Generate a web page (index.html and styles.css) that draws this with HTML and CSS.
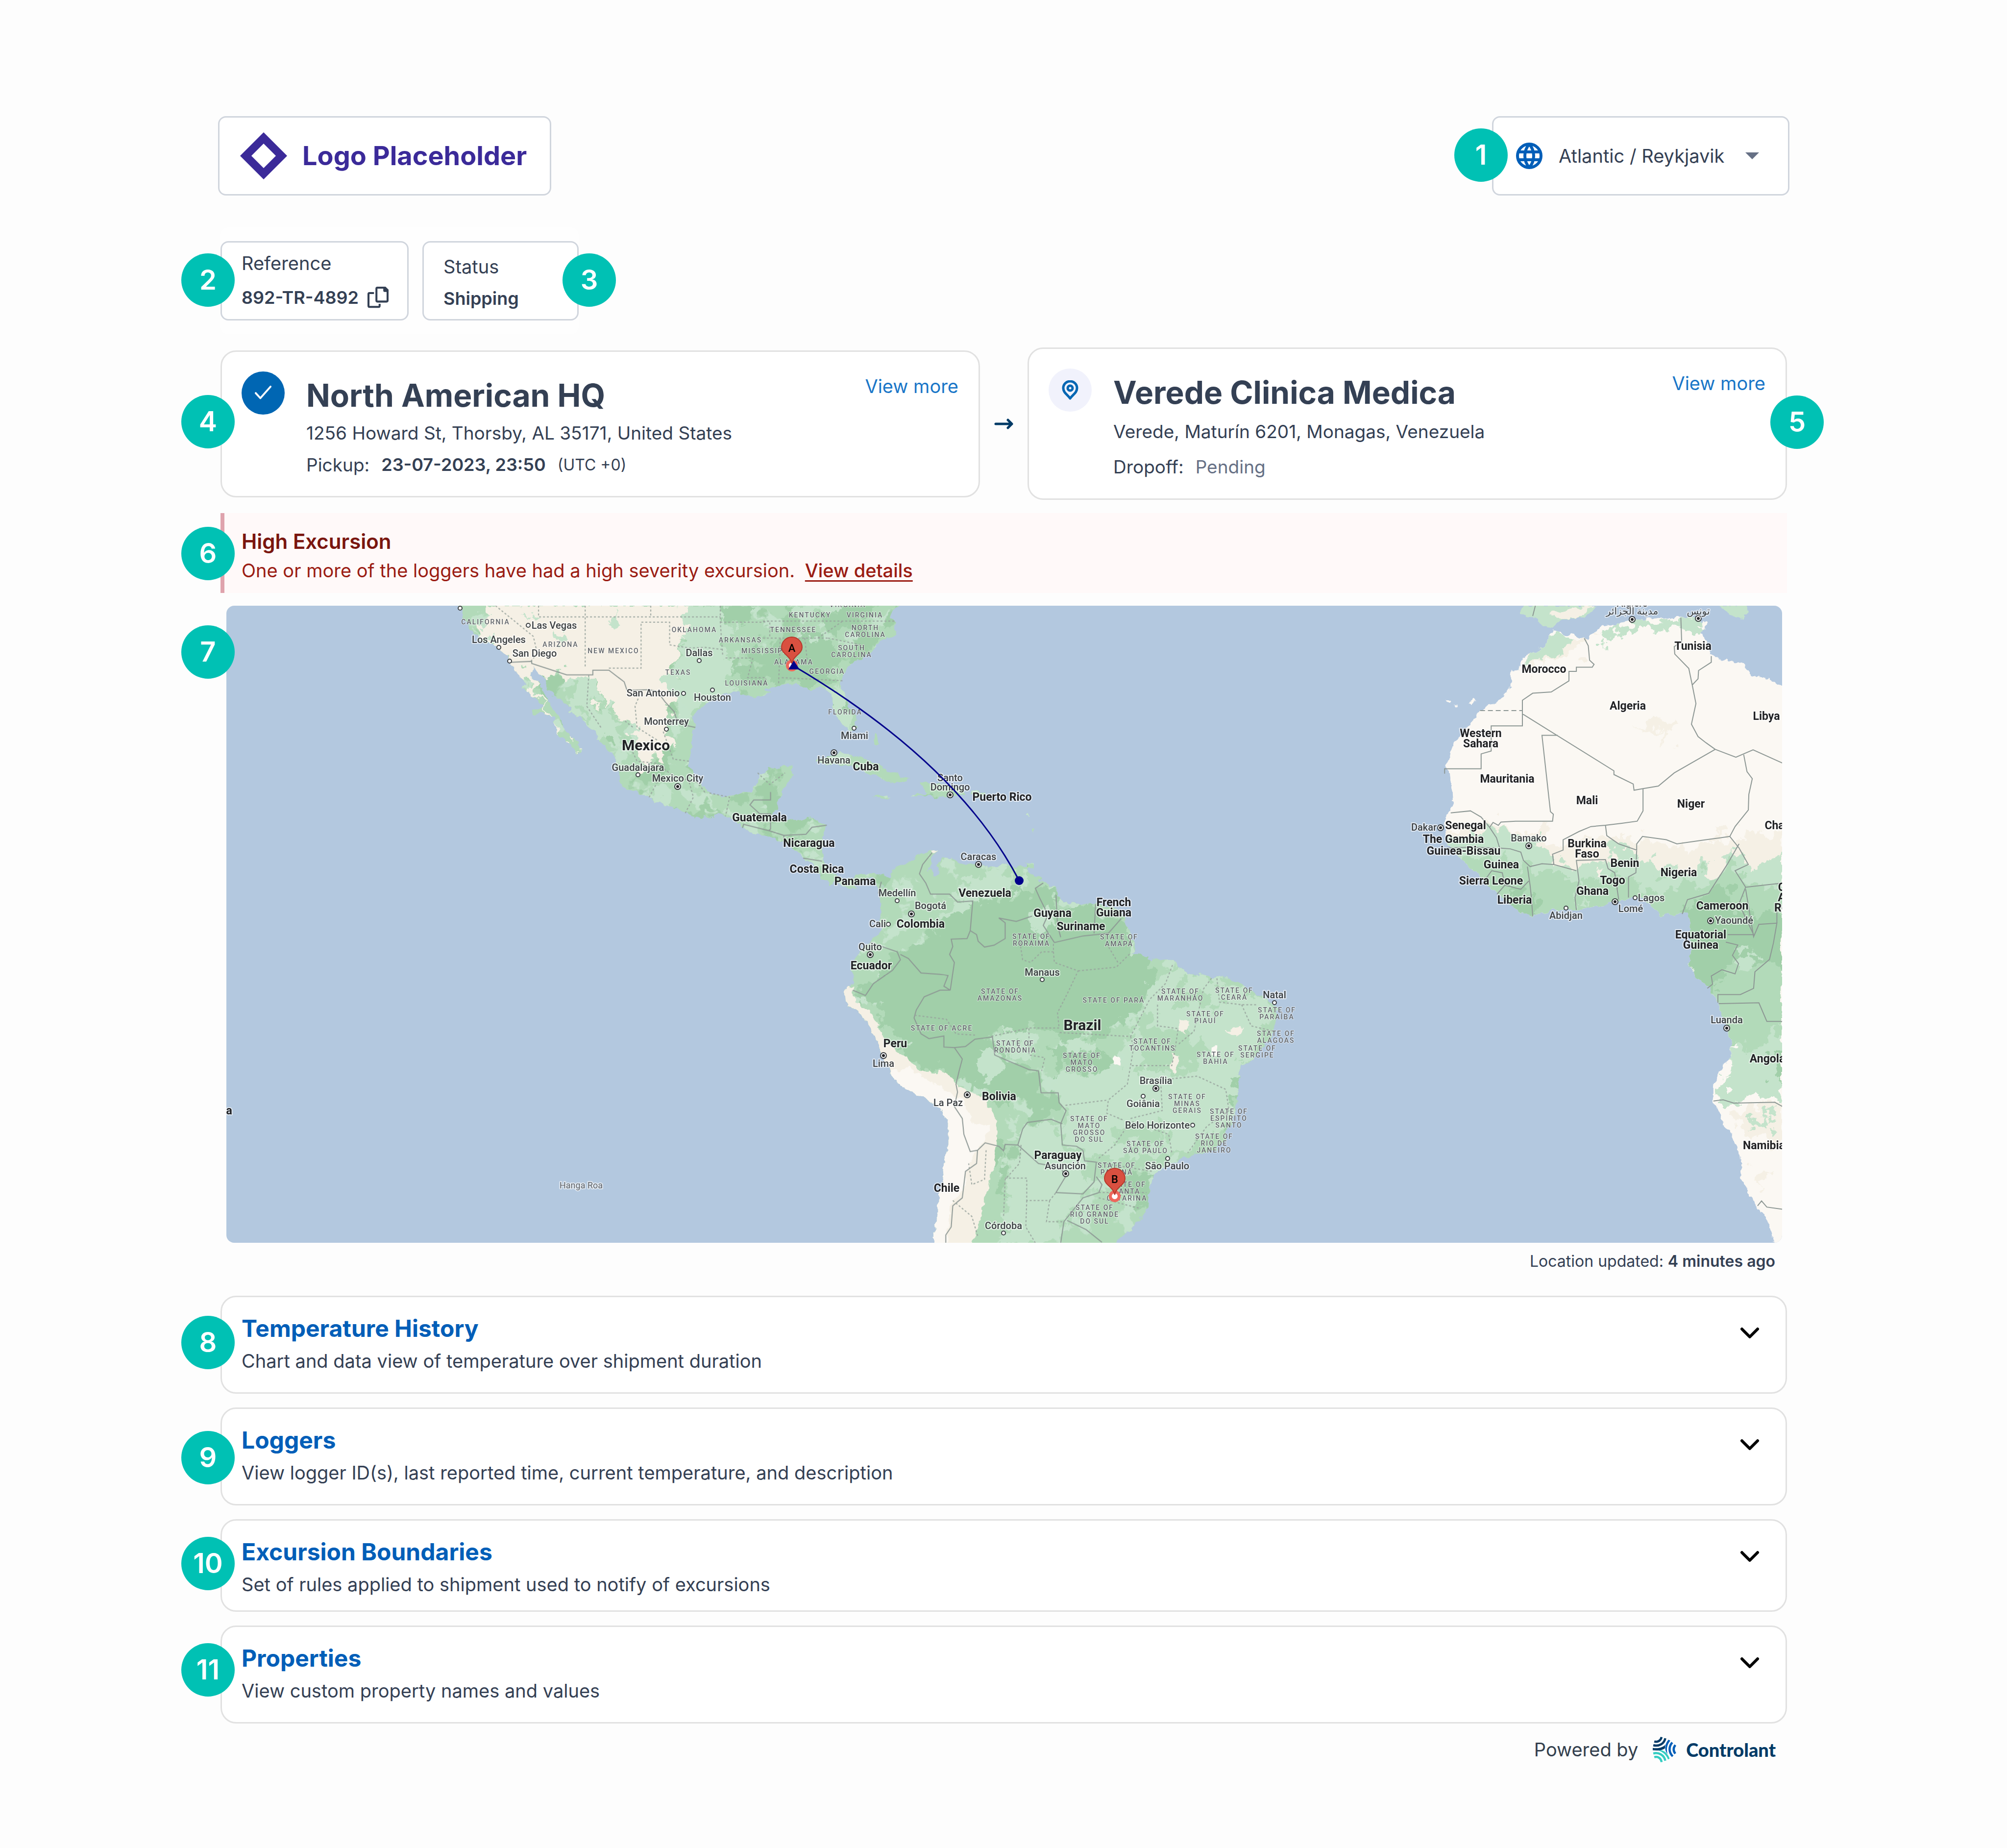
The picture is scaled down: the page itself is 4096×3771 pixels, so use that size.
FILE: index.html
```html
<!DOCTYPE html>
<html lang="en">
<head>
<meta charset="utf-8">
<title>Shipment tracking</title>
<link rel="stylesheet" href="styles.css">
</head>
<body>
<main class="page">
  <header class="header">
    <div class="logo-box">
      <svg class="logo-mark" viewBox="0 0 96 96" aria-hidden="true"><path fill-rule="evenodd" d="M48 0L96 48L48 96L0 48ZM48 23L23 48L48 73L73 48Z"/></svg>
      <span>Logo Placeholder</span>
    </div>
    <div class="timezone">
      <svg class="globe" viewBox="0 0 54 54" aria-hidden="true"><circle cx="27" cy="27" r="24"/><path d="M4 19H50M4 35H50M27 3C15 17 15 37 27 51M27 3C39 17 39 37 27 51"/></svg>
      <select aria-label="Time zone"><option>Atlantic / Reykjavik</option></select>
      <svg class="caret" viewBox="0 0 28 14" aria-hidden="true"><path d="M0 0H28L14 14Z"/></svg>
      <span class="badge badge-1">1</span>
    </div>
  </header>

  <section class="facts">
    <div class="fact fact-reference">
      <span class="fact-label">Reference</span>
      <div class="fact-row">
        <strong>892-TR-4892</strong>
        <button class="copy" type="button" aria-label="Copy reference">
          <svg viewBox="28 36 191 192"><path class="line" d="M87 94H46Q37 94 37 103V209Q37 219 46 219H129Q138 219 138 209V192M188 45H118Q109 45 109 54V162Q109 171 118 171H200Q210 171 210 162V66Z"/><path d="M171 45V72Q171 84 183 84H216V66L190 40Z"/></svg>
        </button>
      </div>
      <span class="badge badge-left badge-2">2</span>
    </div>
    <div class="fact fact-status">
      <span class="fact-label">Status</span>
      <strong>Shipping</strong>
      <span class="badge badge-3">3</span>
    </div>
  </section>

  <section class="route">
    <article class="stop">
      <span class="stop-icon done"><svg viewBox="0 0 36 30"><path d="M2 16L12 27L34 2"/></svg></span>
      <div class="stop-body">
        <h2>North American HQ</h2>
        <p>1256 Howard St, Thorsby, AL 35171, United States</p>
        <p class="stop-time"><span>Pickup:</span><strong>23-07-2023, 23:50</strong><small>(UTC +0)</small></p>
      </div>
      <a class="more" href="#">View more</a>
      <span class="badge badge-left badge-4">4</span>
    </article>
    <svg class="arrow" viewBox="0 0 40 22" aria-hidden="true"><path d="M3 11H36M28 3L36 11L28 19"/></svg>
    <article class="stop stop-roomy">
      <span class="stop-icon pending"><svg class="pin-icon" viewBox="0 0 34 40"><path d="M17 37C11 29 3 25 3 16a14 14 0 0 1 28 0c0 9-8 13-14 21z"/><circle cx="17" cy="16" r="5"/></svg></span>
      <div class="stop-body">
        <h2>Verede Clinica Medica</h2>
        <p>Verede, Maturín 6201, Monagas, Venezuela</p>
        <p class="stop-time"><span>Dropoff:</span><span class="muted">Pending</span></p>
      </div>
      <a class="more" href="#">View more</a>
      <span class="badge badge-5">5</span>
    </article>
  </section>

  <section class="alert">
    <h3>High Excursion</h3>
    <p>One or more of the loggers have had a high severity excursion. <a href="#">View details</a></p>
    <span class="badge badge-6">6</span>
  </section>

  <section class="map-block">
    <svg class="map" viewBox="0 0 3175 1300" role="img" aria-label="Shipment route map">
      <defs>
        <filter id="coast" x="0" y="0" width="100%" height="100%" filterUnits="userSpaceOnUse" color-interpolation-filters="sRGB">
          <feTurbulence type="fractalNoise" baseFrequency="0.06" numOctaves="3" seed="4" result="n"/>
          <feDisplacementMap in="SourceGraphic" in2="n" scale="16" xChannelSelector="R" yChannelSelector="G"/>
        </filter>
        <filter id="patches" x="0" y="0" width="100%" height="100%" filterUnits="userSpaceOnUse" color-interpolation-filters="sRGB">
          <feTurbulence type="fractalNoise" baseFrequency="0.03" numOctaves="4" seed="9" result="n"/>
          <feDisplacementMap in="SourceGraphic" in2="n" scale="80" xChannelSelector="R" yChannelSelector="G"/>
        </filter>
        <filter id="light-spots" x="0" y="0" width="100%" height="100%" filterUnits="userSpaceOnUse" color-interpolation-filters="sRGB">
          <feTurbulence type="fractalNoise" baseFrequency="0.022" numOctaves="4" seed="21"/>
          <feColorMatrix values="0 0 0 0 .77 0 0 0 0 .89 0 0 0 0 .8 22 0 0 0 -12.6" result="s"/>
          <feComposite in="s" in2="SourceAlpha" operator="in"/>
        </filter>
        <filter id="dark-spots" x="0" y="0" width="100%" height="100%" filterUnits="userSpaceOnUse" color-interpolation-filters="sRGB">
          <feTurbulence type="fractalNoise" baseFrequency="0.022" numOctaves="4" seed="35"/>
          <feColorMatrix values="0 0 0 0 .63 0 0 0 0 .81 0 0 0 0 .66 0 22 0 0 -12.6" result="s"/>
          <feComposite in="s" in2="SourceAlpha" operator="in"/>
        </filter>
        <g id="north" transform="matrix(.82065 0 0 .43193 452.4 -10.9)">
          <path d="M22 -10L22 25L35 60L50 115L62 165L95 205L120 215L150 262L152 290L165 320L180 360L190 400L185 425L205 435L225 475L240 505L205 515L215 540L235 535L262 560L270 600L275 640L300 670L318 725L330 715L325 685L310 650L295 620L285 580L265 520L245 460L235 420L220 385L205 350L208 315L225 340L242 370L250 430L275 465L305 500L300 530L330 555L345 590L370 630L385 680L405 720L420 745L415 780L430 810L422 850L440 885L470 905L505 940L540 965L590 1005L630 1030L660 1025L680 1005L700 1030L735 1075L780 1110L825 1135L855 1160L870 1195L890 1225L925 1290L935 1320L950 1345L965 1325L1000 1375L1020 1365L1010 1340L1050 1310L1085 1360L1100 1310L1050 1285L1010 1300L985 1315L955 1290L935 1240L930 1180L935 1110L942 1060L905 1028L860 1035L820 1040L800 1035L815 990L825 930L840 880L855 830L855 790L800 795L775 815L770 860L755 900L720 915L685 930L650 905L620 860L605 800L600 740L605 690L612 600L610 550L625 500L660 470L690 440L735 445L765 455L800 445L790 420L830 400L870 395L905 425L935 410L955 440L955 510L970 560L990 600L1010 615L1015 570L1005 520L990 470L975 400L985 340L1010 290L1060 230L1080 190L1110 160L1115 110L1100 80L1110 40L1125 25L1125 -10Z"/>
          <path d="M915 765L935 735L975 720L1020 740L1060 770L1100 810L1150 850L1080 855L1070 830L1010 790L960 775ZM1175 860L1215 865L1280 890L1285 915L1240 925L1215 945L1200 925L1150 925L1190 910ZM1055 925L1085 920L1100 930L1075 942ZM1300 905L1335 905L1335 922L1300 922ZM1440 1240L1458 1240L1456 1262L1440 1262ZM1436 1010L1446 1008L1446 1022ZM1452 1070L1458 1072L1456 1085ZM1060 630L1072 680L1066 690L1056 650Z"/>
        </g>
        <g id="south" transform="matrix(.64786 0 0 .5399 1197.4 490.3)">
          <path d="M190 120L222 160L228 140L260 80L300 62L330 40L375 15L392 20L375 50L365 85L378 118L396 108L390 70L405 40L435 45L460 60L520 75L560 80L610 70L640 75L690 80L670 95L715 125L765 165L770 190L805 215L870 218L910 220L975 250L985 300L1005 350L1020 385L1000 405L1050 415L1070 440L1085 425L1135 435L1185 485L1220 485L1260 497L1310 500L1370 540L1410 565L1450 590L1462 620L1460 670L1440 730L1400 790L1370 820L1345 830L1340 900L1335 970L1310 1060L1295 1110L1270 1150L1210 1165L1150 1185L1110 1215L1075 1245L1060 1290L1055 1360L1030 1410L1000 1450L960 1490L930 1540H385L383 1440L395 1380L402 1300L410 1220L425 1130L425 1050L410 1005L360 960L310 930L270 900L245 860L220 790L185 700L150 640L105 595L100 545L125 515L130 490L115 480L125 440L150 390L180 360L210 330L215 280L212 220L210 170Z"/>
        </g>
        <g id="africa" transform="matrix(.5399 0 0 .84223 2382.6 -10.9)">
          <path d="M600 70L570 110L490 140L470 165L445 180L445 200L410 240L330 265L280 305L230 345L190 400L215 430L225 480L208 515L190 545L195 580L225 610L260 630L320 665L390 710L450 745L525 765L600 750L690 750L780 740L830 732L900 720L950 725L985 750L1010 765L1060 760L1110 757L1125 785L1115 810L1130 840L1110 880L1140 910L1190 940L1225 975L1250 1020L1278 1075L1275 1110L1240 1130L1208 1180L1208 1215L1250 1270L1300 1325L1315 1400L1345 1440L1400 1490L1430 1530L1437 1580H1500V215L1468 205L1420 190L1350 180L1320 155L1250 145L1195 130L1180 100L1165 80L1185 55L1140 42L1085 42L1000 40L930 45L850 55L780 65L730 95L680 85L640 82Z"/>
        </g>
        <clipPath id="clip-north"><path transform="matrix(.82065 0 0 .43193 452.4 -10.9)" d="M22 -10L22 25L35 60L50 115L62 165L95 205L120 215L150 262L152 290L165 320L180 360L190 400L185 425L205 435L225 475L240 505L205 515L215 540L235 535L262 560L270 600L275 640L300 670L318 725L330 715L325 685L310 650L295 620L285 580L265 520L245 460L235 420L220 385L205 350L208 315L225 340L242 370L250 430L275 465L305 500L300 530L330 555L345 590L370 630L385 680L405 720L420 745L415 780L430 810L422 850L440 885L470 905L505 940L540 965L590 1005L630 1030L660 1025L680 1005L1100 900L600 800L600 740L605 690L612 600L610 550L625 500L660 470L690 440L735 445L765 455L800 445L790 420L830 400L870 395L905 425L935 410L955 440L955 510L970 560L990 600L1010 615L1015 570L1005 520L990 470L975 400L985 340L1010 290L1060 230L1080 190L1110 160L1115 110L1100 80L1110 40L1125 25L1125 -10Z"/></clipPath>
        <clipPath id="clip-south"><path transform="matrix(.64786 0 0 .5399 1197.4 490.3)" d="M190 120L222 160L228 140L260 80L300 62L330 40L375 15L392 20L375 50L365 85L378 118L396 108L390 70L405 40L435 45L460 60L520 75L560 80L610 70L640 75L690 80L670 95L715 125L765 165L770 190L805 215L870 218L910 220L975 250L985 300L1005 350L1020 385L1000 405L1050 415L1070 440L1085 425L1135 435L1185 485L1220 485L1260 497L1310 500L1370 540L1410 565L1450 590L1462 620L1460 670L1440 730L1400 790L1370 820L1345 830L1340 900L1335 970L1310 1060L1295 1110L1270 1150L1210 1165L1150 1185L1110 1215L1075 1245L1060 1290L1055 1360L1030 1410L1000 1450L960 1490L930 1540H385L383 1440L395 1380L402 1300L410 1220L425 1130L425 1050L410 1005L360 960L310 930L270 900L245 860L220 790L185 700L150 640L105 595L100 545L125 515L130 490L115 480L125 440L150 390L180 360L210 330L215 280L212 220L210 170Z"/></clipPath>
        <clipPath id="clip-africa"><path transform="matrix(.5399 0 0 .84223 2382.6 -10.9)" d="M600 70L570 110L490 140L470 165L445 180L445 200L410 240L330 265L280 305L230 345L190 400L215 430L225 480L208 515L190 545L195 580L225 610L260 630L320 665L390 710L450 745L525 765L600 750L690 750L780 740L830 732L900 720L950 725L985 750L1010 765L1060 760L1110 757L1125 785L1115 810L1130 840L1110 880L1140 910L1190 940L1225 975L1250 1020L1278 1075L1275 1110L1240 1130L1208 1180L1208 1215L1250 1270L1300 1325L1315 1400L1345 1440L1400 1490L1430 1530L1437 1580H1500V215L1468 205L1420 190L1350 180L1320 155L1250 145L1195 130L1180 100L1165 80L1185 55L1140 42L1085 42L1000 40L930 45L850 55L780 65L730 95L680 85L640 82Z"/></clipPath>
      </defs>
      <rect class="sea" width="3175" height="1300"/>

      <g filter="url(#coast)">
        <g class="mid"><use href="#north"/><use href="#south"/></g>
        <use href="#north" filter="url(#light-spots)"/>
        <use href="#north" filter="url(#dark-spots)"/>
        <use href="#south" filter="url(#light-spots)"/>
        <g clip-path="url(#clip-north)"><g filter="url(#patches)"><g transform="matrix(.82065 0 0 .43193 452.4 -10.9)">
          <path class="light" d="M560 -10H720L690 120L700 250L690 440L600 520L560 470L520 400L560 330L600 200L540 150ZM960 380L1010 620L950 560ZM880 -10H1000L900 90L850 60Z"/>
          <path class="dark" d="M700 -10H780L770 60L720 110L690 70ZM980 -10H1080L1060 60L960 140L930 110ZM790 200L900 180L980 210L960 350L900 410L760 390L700 360L760 290Z"/>
          <path class="sand" d="M80 -30L560 -30L600 60L570 130L590 200L560 300L540 420L560 560L545 640L530 780L500 770L480 680L450 600L420 560L390 500L350 370L200 340L230 480L290 640L330 730L310 700L260 600L240 540L200 430L150 300L110 230L90 190L90 110Z"/>
          <path class="light" d="M300 360L350 370L380 500L420 600L430 700L380 650L340 560L300 500L320 420ZM190 30L230 60L210 80ZM270 140L300 190L290 220L265 180ZM390 90L430 60L420 120ZM60 60L110 200L80 180Z"/>
        </g></g></g>
        <g clip-path="url(#clip-south)">
          <g filter="url(#patches)"><g transform="matrix(.64786 0 0 .5399 1197.4 490.3)">
            <path class="dark" d="M500 220L580 190L640 200L700 130L770 190L800 240L900 240L985 280L1000 400L1060 430L1070 580L990 640L960 700L780 720L700 690L560 720L480 750L470 870L330 820L260 720L200 610L150 560L230 450L330 340L430 270Z"/>
            <path class="dark" d="M470 740L565 720L590 800L700 850L715 930L790 980L720 1030L640 960L500 930L465 850ZM740 740L900 760L960 840L820 850L760 860ZM1340 840L1360 900L1310 1100L1290 1000ZM1060 1230L1080 1400L990 1340L980 1250ZM570 1060L620 1160L580 1330L560 1200Z"/>
            <path class="light" d="M1100 460L1250 500L1440 590L1440 700L1340 830L1320 1050L1200 1150L1060 1160L900 1180L790 1120L795 1000L760 880L970 830L1000 660L1070 600Z"/>
            <path class="light" d="M640 1060L760 1040L790 1140L880 1200L870 1310L790 1400L740 1540H600L620 1160ZM510 110L640 90L640 170L560 190L500 220L440 265L400 280L370 250L450 210ZM675 230L745 240L740 330L700 340ZM790 720L890 730L880 790L800 780ZM590 700L660 680L700 760L640 780L580 760ZM510 780L590 810L600 860L520 880Z"/>
            <path class="mid" d="M1010 640L1180 700L1240 760L1160 860L1040 850ZM950 1060L1110 1060L1120 1130L960 1130ZM1180 520L1280 560L1240 620L1130 610Z"/>
          </g></g>
          <g transform="matrix(.64786 0 0 .5399 1197.4 490.3)">
            <path class="sand" d="M90 545L125 528L135 590L190 640L222 730L285 790L335 850L420 855L470 915L540 955L580 1040L578 1130L566 1250L540 1400L520 1440L500 1540H370L370 1100L380 1000L240 900L90 620Z"/>
            <path class="pale" d="M245 850L300 840L380 900L470 960L500 1040L560 1060L500 1180L470 1300L430 1360L425 1540H370V1000L240 900Z"/>
            <path class="mid" d="M520 1440L560 1250L600 1150L560 1400L530 1540H490Z"/>
            <path class="pale" d="M1250 755L1275 760L1270 800L1255 790ZM950 790L968 800L960 830L945 825Z"/>
            <path class="sand" d="M1150 650L1185 660L1170 710L1150 690ZM1130 780L1155 800L1140 865L1130 840ZM1300 700L1360 685L1330 720ZM370 10L395 15L385 30Z"/>
          </g>
        </g>
        <path class="light" d="M2643 0L2642 18L2666 21L2685 39L2706 44L2728 27L2771 27L2796 0ZM3047 0L3060 14L3098 28L3104 0Z"/>
        <path class="sand" d="M2700 16L2750 6L2790 0L2760 27L2720 24Z"/>
        <g class="pale"><use href="#africa"/></g>
        <g clip-path="url(#clip-africa)"><g filter="url(#patches)"><g transform="matrix(.5399 0 0 .84223 2382.6 -10.9)">
          <path class="sand" d="M150 560L360 540L600 575L700 590L900 575L1100 600L1250 570L1500 560V700H150ZM900 300L1060 290L1040 330L980 320ZM480 130L760 80L700 130L480 180ZM1270 1240L1500 1220V1300L1440 1330L1340 1300ZM1340 1370L1420 1380L1400 1440Z"/>
          <path class="light" d="M150 590L360 555L430 560L560 590L640 640L800 640L830 605L900 600L1000 650L1200 655L1290 600L1340 640L1500 620V1220L1230 1200L1260 1130L1300 1100L1150 900L150 900Z"/>
          <path class="light" d="M620 60L670 90L640 130L560 150L450 165L490 130ZM770 80L930 45L1200 42L1170 72L930 75L800 95ZM1370 1255L1440 1240L1420 1275L1370 1270Z"/>
          <path class="mid" d="M180 640L420 610L500 650L690 670L690 780H300ZM700 690L900 650L960 700L1140 690L1290 620L1330 690L1500 690V1000L1430 1080L1280 1090L1100 880L700 780Z"/>
          <path class="dark" d="M400 700L530 720V790L430 760ZM1090 740L1250 690L1330 760L1500 750V900L1400 870L1330 900L1280 870L1190 950L1080 880ZM1410 1120L1500 1110V1160L1430 1150Z"/>
          <path class="light" d="M1290 860L1340 840L1360 900L1310 910Z"/>
        </g></g></g>
        <path class="pale" d="M2489 192L2499 192L2496 199ZM2507 204L2515 203L2512 210ZM2537 200L2547 190L2550 192L2541 203Z"/>
      </g>

      <g class="borders" transform="matrix(.82065 0 0 .43193 452.4 -10.9)">
        <path d="M152 293L208 288L208 298L295 352H360V330H400L438 385L445 425L500 422L520 430L540 480L562 525L568 560L590 590L615 600M750 968L760 943H802V905M752 968L775 1008H802V1080L798 1088M732 1075L735 1058L798 1088L835 1110V1130M835 1110L890 1105L905 1072L942 1062M883 1218L930 1232"/>
        <path class="inner" d="M118 25L212 170L222 250L205 290M225 25V78H677M341 25V320M504 25V78M400 320H480V103H551V210L600 225L640 222L683 232M677 25V103L683 260M677 103H783L800 98V170M783 98H1112M783 178H945M826 178L822 400M887 178L893 280M690 272H758L745 365H790V395M830 365L985 380M920 178L980 100M945 178L1040 215M350 352L345 500L380 600M480 430L465 500L470 600L520 660M440 570L460 600M535 620L560 750L600 760M770 815L800 870L838 815M455 700L470 760L520 770L560 830L620 860L640 910M500 930L520 860M600 860L610 930L590 1005M650 910L700 930L690 1020"/>
      </g>
      <g class="borders" transform="matrix(.64786 0 0 .5399 1197.4 490.3)">
        <path d="M375 25L345 70L335 105L355 140L370 182H430L455 212L503 208L495 320L515 335L520 360L540 382L570 375L605 350L605 290L585 272L640 285L690 265M495 320L485 350L435 352L440 380L430 410L445 440L432 545M432 545L400 545L350 570L325 620L318 650L340 710L365 728L412 718V760L445 762L470 805L460 850L450 900L455 930L445 985L470 1030L475 1090L495 1155L518 1150L542 1122L585 1135L600 1152L605 1128L645 1130M445 762L480 758L510 730L565 722L572 790L620 815L680 845L710 850L718 933H772L775 970L797 1000L780 1050L785 1130L830 1135L850 1150L855 1190L892 1195L885 1270L850 1315L765 1310L795 1250L780 1215L710 1200L645 1130L660 1070L675 1045L750 1033L785 1050M892 1250L910 1280L900 1310L850 1330L790 1420L780 1500M800 1415L860 1450L910 1498M215 135L205 180M180 365L265 400L275 430L250 470L190 520L165 565L125 545M275 410L300 425L340 480L400 485L425 490L412 530L432 545M518 1150L515 1200L480 1230L470 1330L440 1360L435 1440L418 1470V1500M725 140L700 160L715 200L740 260L725 300L760 365M765 185L770 300L780 345M760 365L850 340L930 330L970 275M890 220L885 330"/>
        <path class="inner" d="M650 350L660 430L685 440L720 400H757V370M757 400L760 440L835 472L800 560L770 630L775 688H680L560 720M835 472L955 458L1000 405M925 370L960 440M1132 450L1110 520L1060 580L1000 720L775 705M1000 720L1010 760L990 900L930 960L925 1010L975 1035M1085 600V680L1150 690L1140 770L1130 830L1000 830M1255 500L1230 540L1200 700L1150 750M1272 500L1280 590L1350 600L1400 600M1350 600L1380 680L1450 700M1130 880L1210 870L1300 920L1310 1000L1240 1060L1180 1160M1000 1030L1100 1000L1095 890M795 980L930 960M900 1180L950 1130L1000 1040L1120 1090L1130 1160M320 640L420 655L450 710L510 715M680 690V790L730 800L720 850M890 1195L1070 1230M900 1310L1050 1310M900 1330L1030 1370M655 1130L650 1200L605 1260L600 1400M605 1255H673V1340H745L765 1310M673 1340L670 1440L700 1500M745 1340L735 1420H785M545 1150L540 1260L500 1280L490 1200M440 1340L500 1400L520 1480"/>
      </g>
      <g class="borders" transform="matrix(.5399 0 0 .84223 2382.6 -10.9)">
        <path d="M525 38L535 13M720 92L735 110L740 145L757 155L750 162H690V172H662V195L595 222L525 225L486 242V304H368V365L330 372V408H192V420M486 275L832 413V422L905 445L908 460L942 456L1000 450L1060 418L1215 361L1293 380L1358 362L1468 394M1085 42L1088 100L1060 112L1062 130L1115 165L1128 205L1142 250L1125 300L1150 330L1180 345L1215 361M1128 205L1150 190L1152 170L1200 150V135M620 327H560L592 512L603 518L600 535H460L405 537L395 545L375 538L362 550L330 525L290 510L215 515M942 456V510L920 535L862 540L800 545M800 545L745 548L700 560L640 580L640 605L600 615L605 640L560 638L515 645L490 630L480 610L440 602L400 600L388 575L362 550M800 545L805 570L850 590L918 605V590L940 572L1030 580L1070 590L1180 580L1270 572L1290 548L1340 508L1342 470L1355 432L1335 415L1322 372M1270 572L1305 600L1340 640L1290 655L1330 695L1468 685M1305 590L1260 640L1190 710L1110 725L1090 760M918 605L915 660L887 670V720M690 750L685 720L700 680L690 630L800 628L810 650L835 660L850 725M835 660L845 700M605 640L690 655M505 645L515 690L520 720L525 765M330 690L370 655L410 660L420 690L390 712M420 690L480 700L510 680M200 600L290 598L388 600M1330 695L1305 735L1360 810H1262M1330 700L1360 815L1380 785L1448 782L1435 830L1420 870L1365 900L1360 940L1310 955L1225 955L1225 975M1255 828L1300 835L1280 860L1303 880L1290 905L1240 895L1200 910L1205 930L1185 940M1228 977L1380 975L1410 1020L1468 1020M1208 1213L1245 1210L1285 1218L1440 1216L1468 1226M1375 1467L1390 1455L1410 1470L1468 1475M1448 782V750L1468 740"/>
        <path class="dash" d="M326 267H486"/>
      </g>

      <g id="places"></g>

      <path class="track" d="M1158 123Q1492 320 1618 561"/>
      <circle class="track-end" cx="1618" cy="561" r="9"/>
      <g class="pin" transform="translate(1154 118)"><circle cx="0" cy="4" r="9"/><path d="M0 0C-3 -16 -21 -20 -21 -33A21 21 0 0 1 21 -33C21 -20 3 -16 0 0Z"/><text y="-24">A</text></g>
      <path class="track-head" d="M1158 112L1170 130H1147Z"/>
      <g class="pin" transform="translate(1813 1202)"><circle cx="0" cy="3" r="9"/><path d="M0 0C-3 -16 -21 -20 -21 -33A21 21 0 0 1 21 -33C21 -20 3 -16 0 0Z"/><text y="-24">B</text></g>
    </svg>
    <span class="badge badge-7">7</span>
  </section>
  <p class="updated">Location updated: <strong>4 minutes ago</strong></p>

  <div class="sections">
    <section class="panel">
      <button type="button" aria-expanded="false">
        <span class="panel-text"><span class="panel-title">Temperature History</span><span>Chart and data view of temperature over shipment duration</span></span>
        <svg viewBox="0 0 60 60"><path d="M14 22L30 38L46 22"/></svg>
      </button>
      <span class="badge badge-left badge-8">8</span>
    </section>
    <section class="panel">
      <button type="button" aria-expanded="false">
        <span class="panel-text"><span class="panel-title">Loggers</span><span>View logger ID(s), last reported time, current temperature, and description</span></span>
        <svg viewBox="0 0 60 60"><path d="M14 22L30 38L46 22"/></svg>
      </button>
      <span class="badge badge-left badge-9">9</span>
    </section>
    <section class="panel panel-compact">
      <button type="button" aria-expanded="false">
        <span class="panel-text"><span class="panel-title">Excursion Boundaries</span><span>Set of rules applied to shipment used to notify of excursions</span></span>
        <svg viewBox="0 0 60 60"><path d="M14 22L30 38L46 22"/></svg>
      </button>
      <span class="badge badge-left badge-10">10</span>
    </section>
    <section class="panel">
      <button type="button" aria-expanded="false">
        <span class="panel-text"><span class="panel-title">Properties</span><span>View custom property names and values</span></span>
        <svg viewBox="0 0 60 60"><path d="M14 22L30 38L46 22"/></svg>
      </button>
      <span class="badge badge-left badge-10">11</span>
    </section>
  </div>

  <footer class="footer">
    <span>Powered by</span>
    <svg class="brand-mark" viewBox="38 40 214 232" aria-hidden="true">
      <g class="teal"><path d="M52 226C85 216 112 236 119 270M43 192C92 180 142 204 152 258"/><path class="solid" d="M85 163C130 155 170 180 192 238L177 246C160 205 130 178 85 163Z"/></g>
      <g class="blue"><path d="M216 92C183 128 182 182 220 218M244 115C224 140 224 168 243 194"/><path class="solid" d="M181 67L198 74C168 112 160 150 172 196C148 170 138 118 181 67Z"/></g>
      <g class="navy"><path d="M52 83C85 92 112 74 118 43M43 117C95 130 142 104 152 54"/><path class="solid" d="M38 141C90 150 132 136 154 110C149 122 148 132 150 144C125 165 85 168 38 163Z"/></g>
    </svg>
    <strong>Controlant</strong>
  </footer>
</main>
<script src="map.js"></script>
</body>
</html>
```
FILE: styles.css
```css
* { box-sizing: border-box; }

body {
  margin: 0;
  background: #fdfdfd;
  color: #344054;
  font: 400 38px/48px Inter, "Liberation Sans", sans-serif;
}

h2, h3, p { margin: 0; }
a { color: inherit; }
button { font: inherit; color: inherit; background: none; border: 0; padding: 0; cursor: pointer; text-align: left; }
svg { display: block; flex: none; }
strong { font-weight: 600; }

.page { padding: 237px 449px 174px 450px; }

.badge {
  position: absolute;
  width: 109px;
  height: 109px;
  border-radius: 50%;
  background: #00c1b4;
  color: #fff;
  font-size: 56px;
  line-height: 109px;
  font-weight: 600;
  text-align: center;
}
.badge-left { left: -83px; }
.badge-1 { left: -80px; top: 22px; }
.badge-2 { top: 22px; }
.badge-3 { right: -79px; top: 22px; }
.badge-4 { top: 88px; }
.badge-5 { right: -78px; top: 95px; }
.badge-6 { left: -88px; top: 28px; }
.badge-7 { left: -92px; top: 40px; }
.badge-8 { top: 38px; }
.badge-9 { top: 45px; }
.badge-10 { top: 33px; }

/* Header */
.header { display: flex; justify-content: space-between; margin: 0 -5px; }
.logo-box, .timezone, .fact {
  position: relative;
  background: #fff;
  border: 3px solid #d0d5dd;
  border-radius: 16px;
  height: 162px;
}
.logo-box {
  display: flex;
  align-items: center;
  gap: 31px;
  padding: 0 42px;
  width: 680px;
  color: #3b2a99;
  font-size: 54px;
  font-weight: 700;
  white-space: nowrap;
}
.logo-mark { width: 96px; fill: currentColor; }

.timezone { display: flex; align-items: center; gap: 33px; width: 607px; padding: 0 59px 0 46px; }
.timezone select {
  flex: 1;
  min-width: 0;
  height: 100%;
  appearance: none;
  border: 0;
  padding: 0;
  background: none;
  font: inherit;
  color: inherit;
}
.globe { width: 54px; fill: none; stroke: #005eb8; stroke-width: 6; }
.caret { width: 28px; fill: #667085; }

/* Reference and status */
.facts { display: flex; gap: 28px; width: 731px; margin-top: 65px; padding: 28px 0; background: #fefefe; border-radius: 16px; }
.fact { padding: 18px 40px; }
.fact-reference { width: 384px; }
.fact-status { width: 319px; padding-top: 25px; }
.fact-label { display: block; margin-bottom: 22px; }
.fact-status .fact-label { margin-bottom: 17px; }
.fact strong { display: block; font-size: 36px; white-space: nowrap; }
.fact-row { display: flex; gap: 18px; align-items: center; }
.copy svg { width: 43px; fill: #344054; }
.copy .line { fill: none; stroke: #344054; stroke-width: 18; }

/* Route cards */
.route { display: grid; grid-template-columns: 1fr 97px 1fr; align-items: center; justify-items: center; margin-top: 27px; }
.stop {
  position: relative;
  justify-self: stretch;
  display: flex;
  align-items: flex-start;
  gap: 44px;
  padding: 40px 41px 31px 40px;
  background: #fff;
  border: 3px solid #e1e1e1;
  border-radius: 32px;
}
.stop-roomy { padding-bottom: 28px; }
.stop-icon { display: grid; place-items: center; width: 88px; height: 88px; border-radius: 50%; flex: none; }
.stop-icon svg { width: 34px; fill: none; stroke-width: 4; stroke: #fff; stroke-linecap: round; stroke-linejoin: round; }
.done { background: #0066b3; }
.pending { background: #f1f2fc; }
.stop-icon .pin-icon { stroke: #0066b3; stroke-width: 5; }
.stop-body { flex: 1; padding-top: 9px; font-size: 37px; line-height: 65px; }
.stop-roomy .stop-body { line-height: 72px; }
.stop h2 { font-size: 64px; line-height: 80px; font-weight: 700; margin-bottom: 4px; }
.stop-time { display: flex; gap: 24px; }
.stop-time strong { font-size: 36px; }
.stop-time small { font-size: 32px; }
.muted { color: #667085; }
.more { margin-top: 6px; color: #1976c8; text-decoration: none; }
.arrow { width: 40px; fill: none; stroke: #003a66; stroke-width: 5; stroke-linecap: round; stroke-linejoin: round; }

/* Alert */
.alert {
  position: relative;
  margin-top: 27px;
  padding: 31px 35px 19px;
  border-left: 8px solid #dfa3ad;
  background: #fff9f9;
  color: #9b1c13;
  line-height: 54px;
}
.alert h3 { margin-bottom: 5px; color: #7a150e; font-size: 42px; font-weight: 600; }
.alert a { margin-left: 10px; font-weight: 500; text-decoration-thickness: 3px; text-underline-offset: 6px; }

/* Map */
.map-block { position: relative; margin: 26px 10px 0 12px; }
.map { width: 100%; height: auto; border-radius: 16px; overflow: hidden; font-family: Roboto, "DejaVu Sans", sans-serif; }
.sea { fill: #b3c8df; }
.mid { fill: #b2dab9; }
.light { fill: #c4e3cb; }
.dark { fill: #a1cfa9; }
.sand { fill: #f5f0e5; }
.pale { fill: #fbf8f3; }
.borders path { fill: none; stroke: #8d9794; stroke-width: 2; vector-effect: non-scaling-stroke; }
.borders .inner { stroke: #98a39d; stroke-dasharray: 4 4; }
.borders .dash { stroke-dasharray: 10 6; }
.map text { text-anchor: middle; paint-order: stroke; stroke: #fff; stroke-opacity: .6; stroke-width: 4px; stroke-linejoin: round; }
.map .nation { font-size: 30px; font-weight: 700; fill: #202124; }
.map .country { font-size: 23px; font-weight: 700; fill: #202124; }
.map .city { font-size: 20px; font-weight: 500; fill: #3c4043; }
.map .town { font-size: 18px; fill: #5f6368; }
.map .state { font-size: 14px; font-weight: 500; fill: #5f6368; letter-spacing: 2px; stroke-width: 2px; }
.town-dot { fill: #fff; stroke: #3c4043; stroke-width: 2; }
.capital-core { fill: #202124; }
.track { fill: none; stroke: #00008b; stroke-width: 3; }
.track-end, .track-head { fill: #00008b; }
.pin circle { fill: #fff; stroke: #ee675c; stroke-width: 6; }
.pin path { fill: #d95040; stroke: #b63a2c; stroke-width: 2; }
.map .pin text { font-size: 22px; font-weight: 500; fill: #000; stroke: none; }

.updated { padding: 0 24px 32px; text-align: right; font-size: 32px; line-height: 76px; }

/* Expandable sections */
.sections { display: grid; gap: 28px; }
.panel { position: relative; background: #fff; border: 3px solid #e1e1e1; border-radius: 32px; }
.panel button { display: flex; justify-content: space-between; align-items: flex-start; width: 100%; padding: 34px 43px 34px 40px; line-height: 60px; }
.panel-compact button { padding-bottom: 23px; }
.panel-text { display: grid; gap: 6px; }
.panel-title { color: #005eb8; font-size: 48px; font-weight: 700; }
.panel svg { width: 60px; margin-top: 9px; fill: none; stroke: #000; stroke-width: 6; stroke-linecap: round; stroke-linejoin: round; }

/* Footer */
.footer { display: flex; justify-content: flex-end; align-items: center; margin-top: 27px; padding-right: 23px; color: #333f4d; }
.footer strong { margin-left: 20px; color: #003a66; font-family: Lato, sans-serif; font-weight: 900; }
.brand-mark { width: 48px; margin-left: 30px; }
.brand-mark path { fill: none; stroke-width: 20; }
.brand-mark .solid { stroke: none; }
.navy path { stroke: #003a66; }
.navy .solid { fill: #003a66; }
.blue path { stroke: #005eb8; }
.blue .solid { fill: #005eb8; }
.teal path { stroke: #34cdc2; }
.teal .solid { fill: #34cdc2; }
```
FILE: map.js
```js
// Place names and town markers, grouped by map sheet. Each sheet has its own
// origin and grid step; a name's lines are separated by "/".
const sheets = [
  {
    x0: 452, y0: -11, dx: 0.82065, dy: 0.43193,
    names: {
      state: [["CALIFORNIA", 94, 104], ["ARIZONA", 280, 210], ["NEW MEXICO", 412, 240], ["OKLAHOMA", 613, 142], ["KENTUCKY", 900, 71], ["VIRGINIA", 1037, 71], ["VIRGINIA", 994, 22], ["TENNESSEE", 859, 142], ["NORTH/CAROLINA", 1038, 132], ["ARKANSAS", 727, 191], ["MISSISSIPPI", 792, 241], ["ALABAMA", 860, 295], ["SOUTH/CAROLINA", 1004, 228], ["GEORGIA", 943, 338], ["TEXAS", 573, 343], ["LOUISIANA", 743, 394], ["FLORIDA", 988, 531]],
      city: [["Las Vegas", 265, 120], ["Los Angeles", 127, 188], ["San Diego", 216, 252], ["Dallas", 625, 249], ["San Antonio", 511, 441], ["Houston", 658, 461], ["Monterrey", 544, 574], ["Miami", 1011, 641], ["Havana", 960, 758], ["Guadalajara", 473, 792], ["Mexico City", 571, 843], ["Santo/Domingo", 1249, 840]],
      country: [["Cuba", 1039, 787], ["Puerto Rico", 1378, 930], ["Guatemala", 775, 1027], ["Nicaragua", 898, 1149], ["Costa Rica", 917, 1270], ["Panama", 1013, 1330]],
      nation: [["Mexico", 492, 687]]
    },
    towns: [[30, 38], [200, 119], [127, 222], [153, 286], [625, 284], [586, 440], [658, 424], [543, 608], [1010, 604], [473, 825]],
    capitals: [[960, 719], [571, 879], [1249, 918]]
  },
  {
    x0: 1197, y0: 490, dx: 0.64786, dy: 0.5399,
    names: {
      state: [["STATE OF/RORAIMA", 688, 344], ["STATE OF/AMAPÁ", 964, 346], ["STATE OF/AMAZONAS", 589, 552], ["STATE OF PARÁ", 948, 585], ["STATE OF/MARANHÃO", 1157, 552], ["STATE OF/CEARÁ", 1328, 548], ["STATE OF/PARAÍBA", 1461, 622], ["STATE OF/PIAUÍ", 1236, 638], ["STATE OF ACRE", 406, 690], ["STATE OF/ALAGOAS", 1458, 711], ["STATE OF/RONDÔNIA", 638, 748], ["STATE OF/TOCANTINS", 1070, 741], ["STATE OF/SERGIPE", 1400, 767], ["STATE OF/BAHIA", 1269, 790], ["STATE OF/MATO/GROSSO", 848, 794], ["STATE OF/MINAS/GERAIS", 1179, 950], ["STATE OF/ESPÍRITO/SANTO", 1310, 1005], ["STATE OF/MATO/GROSSO/DO SUL", 871, 1034], ["STATE OF/RIO DE/JANEIRO", 1264, 1100], ["STATE OF/SÃO PAULO", 1048, 1128], ["STATE OF/PARANÁ", 957, 1210], ["STATE OF/SANTA/CATARINA", 989, 1282], ["STATE OF/RIO GRANDE/DO SUL", 887, 1369]],
      city: [["Caracas", 521, 42], ["Medellín", 266, 180], ["Bogotá", 371, 228], ["Cali", 203, 297], ["Quito", 181, 384], ["Manaus", 723, 479], ["Natal", 1454, 565], ["Lima", 223, 825], ["Brasília", 1081, 889], ["Goiânia", 1040, 976], ["La Paz", 426, 972], ["Belo Horizonte", 1085, 1058], ["São Paulo", 1116, 1211], ["Asunción", 795, 1212], ["Córdoba", 601, 1438]],
      country: [["Venezuela", 542, 180], ["Colombia", 339, 296], ["Ecuador", 184, 454], ["Guyana", 755, 255], ["French/Guiana", 948, 215], ["Suriname", 845, 305], ["Peru", 260, 748], ["Bolivia", 587, 949], ["Paraguay", 771, 1171], ["Chile", 421, 1294]],
      nation: [["Brazil", 849, 680]]
    },
    towns: [[266, 207], [238, 296], [723, 506], [1454, 592], [1040, 946], [1197, 1055], [1118, 1181], [601, 1464]],
    capitals: [[521, 70], [310, 257], [181, 412], [223, 793], [1080, 917], [486, 941], [796, 1240]]
  },
  {
    x0: 2383, y0: -11, dx: 0.5399, dy: 0.84223,
    names: {
      city: [["Algiers", 900, 8], ["مدينة الجزائر", 900, 27], ["تونس", 1151, 27], ["Dakar", 113, 551], ["Bamako", 509, 577], ["Lagos", 973, 722], ["Lomé", 895, 748], ["Abidjan", 650, 765], ["Yaoundé", 1285, 777], ["Luanda", 1257, 1018]],
      country: [["Tunisia", 1129, 112], ["Morocco", 567, 167], ["Algeria", 884, 256], ["Libya", 1408, 281], ["Western/Sahara", 328, 323], ["Mauritania", 427, 433], ["Mali", 730, 486], ["Niger", 1122, 494], ["Chad", 1450, 546], ["Senegal", 270, 546], ["The Gambia", 224, 580], ["Guinea-Bissau", 263, 608], ["Burkina/Faso", 730, 590], ["Benin", 872, 638], ["Guinea", 405, 641], ["Sierra Leone", 367, 680], ["Liberia", 456, 727], ["Togo", 826, 679], ["Nigeria", 1076, 660], ["Ghana", 750, 705], ["Central/African/Republic", 1520, 696], ["Cameroon", 1241, 741], ["Equatorial/Guinea", 1160, 811], ["Angola", 1412, 1111], ["Namibia", 1399, 1321]]
    },
    towns: [[911, 721], [650, 746]],
    capitals: [[900, 46], [1151, 44], [176, 551], [509, 595], [835, 730], [1197, 777], [1258, 1036]]
  },
  {
    x0: 0, y0: 0, dx: 1, dy: 1,
    names: { town: [["Hanga Roa", 724, 1184]], country: [["Samoa", -24, 1031]] },
    towns: [],
    capitals: []
  }
];

const lineStep = { nation: 30, country: 21, city: 19, town: 16, state: 14 };
const halfCap = { nation: 9, country: 7, city: 6, town: 5, state: 4 };
const layer = document.getElementById("places");

function add(tag, attrs, text) {
  const node = document.createElementNS("http://www.w3.org/2000/svg", tag);
  for (const key in attrs) node.setAttribute(key, attrs[key]);
  if (text) node.textContent = text;
  layer.append(node);
}

for (const s of sheets) {
  const px = x => Math.round(s.x0 + x * s.dx);
  const py = y => Math.round(s.y0 + y * s.dy);
  for (const [x, y] of s.towns) add("circle", { class: "town-dot", cx: px(x), cy: py(y), r: 4 });
  for (const [x, y] of s.capitals) {
    add("circle", { class: "town-dot", cx: px(x), cy: py(y), r: 6 });
    add("circle", { class: "capital-core", cx: px(x), cy: py(y), r: 3 });
  }
  for (const kind in s.names) {
    for (const [name, x, y] of s.names[kind]) {
      name.split("/").forEach((line, i) =>
        add("text", { class: kind, x: px(x), y: py(y) + halfCap[kind] + i * lineStep[kind] }, line));
    }
  }
}
```
